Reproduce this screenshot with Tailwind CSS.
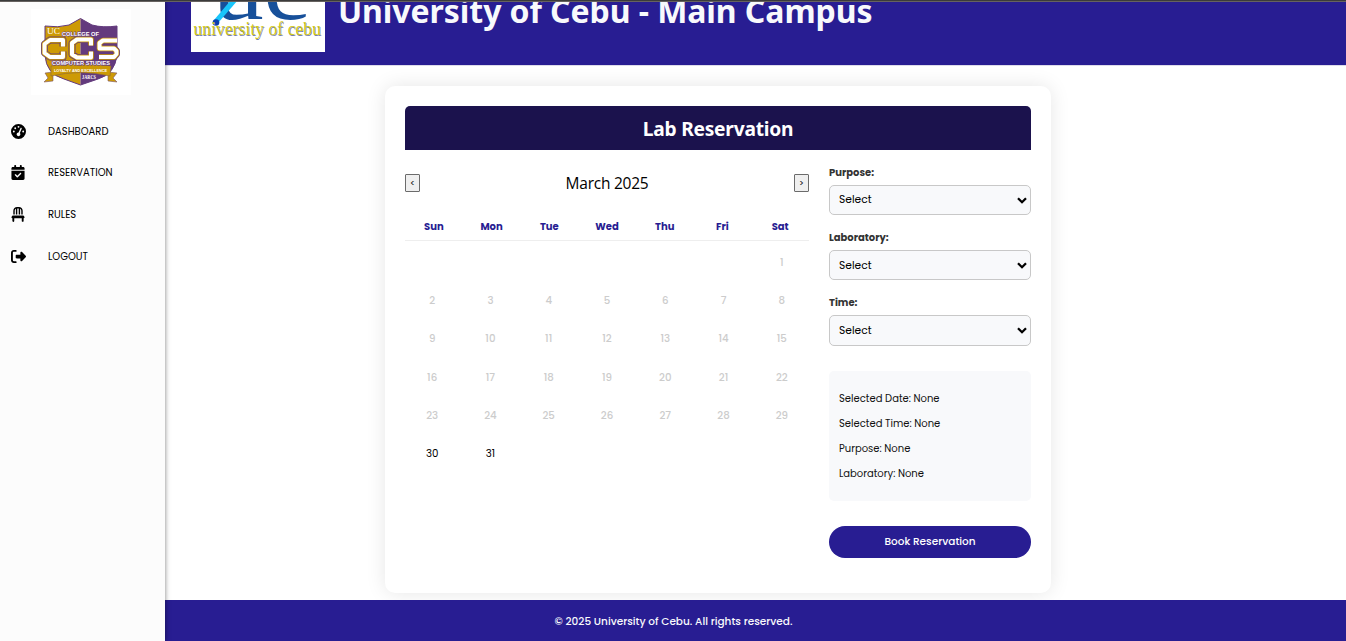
<!DOCTYPE html>
<html lang="en">
<head>
<meta charset="utf-8">
<title>Lab Reservation</title>
<script src="https://cdn.jsdelivr.net/npm/@tailwindcss/browser@4"></script>
</head>
<body class="bg-white font-['Poppins','Inter',sans-serif] text-[10px] text-black">
<div class="relative flex h-[641px] w-[1346px] overflow-hidden">
  <aside class="z-10 w-[165px] shrink-0 bg-[#fcfcfc] pt-[9px] shadow-[0_0_5px_rgba(0,0,0,0.5)]">
    <svg class="ml-[31px] block bg-white" width="100" height="86" viewBox="31 9 100 86">
      <path d="M80.500 18.500L69 25Q58 28 45 26V55Q46 74 64 79L80.500 85Z" fill="#cd9a05"/>
      <path d="M80.500 18.500L92 25Q103 28 117 26V55Q115 74 98 79L80.500 85Z" fill="#633a7d"/>
      <path d="M80.500 18.500L69 25Q58 28 45 26V55Q46 74 64 79L80.500 85L98 79Q115 74 117 55V26Q103 28 92 25Z" fill="none" stroke="#633a7d"/>
      <path d="M45 73L53 72V81L44 82L48 78ZM117 73L108 72V81L117 82L113 78Z" fill="#cd9a05" stroke="#7c5568" stroke-width=".6"/>
      <path d="M51 66Q80.500 60 111 66L110 76Q80.500 69 51 76Z" fill="#cd9a05" stroke="#8a6440" stroke-width=".6"/>
      <g font-family="Liberation Serif" font-weight="700" fill="#fff">
        <text x="47" y="34" font-size="8" font-weight="400" textLength="13" lengthAdjust="spacingAndGlyphs">UC</text>
        <text x="82" y="78.500" font-size="5.500" textLength="14" lengthAdjust="spacingAndGlyphs">JARCS</text>
      </g>
      <g font-family="Liberation Sans" font-weight="700" stroke-linejoin="round" paint-order="stroke">
        <text x="62" y="36" font-size="5" fill="#fff" stroke="#633a7d" stroke-width="1" textLength="37" lengthAdjust="spacingAndGlyphs">COLLEGE OF</text>
        <text x="52" y="65" font-size="5" fill="#fff" stroke="#633a7d" stroke-width="1.200" textLength="58" lengthAdjust="spacingAndGlyphs">COMPUTER STUDIES</text>
        <text x="54" y="72" font-size="3.500" fill="#fff" textLength="53" lengthAdjust="spacingAndGlyphs">LOYALTY AND EXCELLENCE</text>
      </g>
      <g fill="none" stroke-linejoin="round">
        <g stroke="#633a7d" stroke-width="7"><path d="M63 46.500V40H50L44.500 44V53L50 57H63V51.500M91 45.500V39.500H77L72 43V54.500L77 57.500H91V51.500M117 40.500H103L99.500 43V48.500H114L116.500 51V54L114 57H99"/></g>
        <g stroke="#cd9a05" stroke-width="5.500"><path d="M63 46.500V40H50L44.500 44V53L50 57H63V51.500M91 45.500V39.500H77L72 43V54.500L77 57.500H91V51.500M117 40.500H103L99.500 43V48.500H114L116.500 51V54L114 57H99"/></g>
        <g stroke="#fff" stroke-width="4"><path d="M63 46.500V40H50L44.500 44V53L50 57H63V51.500M91 45.500V39.500H77L72 43V54.500L77 57.500H91V51.500M117 40.500H103L99.500 43V48.500H114L116.500 51V54L114 57H99"/></g>
      </g>
    </svg>
    <nav class="mt-[15.600px] text-[10px]">
      <a class="flex h-[41.600px] items-center pl-[11px]"><svg class="mr-[22px] h-[15px] w-[15px]" viewBox="0 0 512 512"><path d="M0 256a256 256 0 1 1 512 0A256 256 0 1 1 0 256zM288 96a32 32 0 1 0 -64 0 32 32 0 1 0 64 0zM256 416c35.300 0 64-28.700 64-64c0-17.400-6.900-33.100-18.100-44.600L366 161.700c5.300-12.100-.2-26.300-12.300-31.600s-26.300 .2-31.600 12.300L257.900 288c-.6 0-1.300 0-1.900 0c-35.300 0-64 28.700-64 64s28.700 64 64 64zM176 144a32 32 0 1 0 -64 0 32 32 0 1 0 64 0zM96 288a32 32 0 1 0 0-64 32 32 0 1 0 0 64zm352-32a32 32 0 1 0 -64 0 32 32 0 1 0 64 0z"/></svg><span>DASHBOARD</span></a>
      <a class="flex h-[41.600px] items-center pl-[11px]"><svg class="mr-[23px] h-[15px] w-[14px]" viewBox="0 0 448 512"><path d="M128 0c17.700 0 32 14.300 32 32V64H288V32c0-17.700 14.300-32 32-32s32 14.300 32 32V64h48c26.500 0 48 21.500 48 48v48H0V112C0 85.500 21.500 64 48 64H96V32c0-17.700 14.300-32 32-32zM0 192H448V464c0 26.500-21.500 48-48 48H48c-26.500 0-48-21.500-48-48V192zM329 305c9.400-9.400 9.400-24.600 0-33.900s-24.600-9.400-33.900 0l-95 95-47-47c-9.400-9.400-24.600-9.400-33.900 0s-9.400 24.600 0 33.900l64 64c9.400 9.400 24.600 9.400 33.900 0L329 305z"/></svg><span>RESERVATION</span></a>
      <a class="flex h-[41.600px] items-center pl-[11px]"><svg class="mr-[23px] h-[15px] w-[14px]" viewBox="0 0 448 512"><path d="M248 48l0 208 48 0 0-197.300c23.900 13.800 40 39.700 40 69.300l0 128 48 0 0-128C384 57.300 326.700 0 256 0L192 0C121.300 0 64 57.300 64 128l0 128 48 0 0-128c0-29.600 16.100-55.500 40-69.300L152 256l48 0 0-208 48 0zM48 288c-12.100 0-23.200 6.800-28.600 17.700l-16 32c-5 9.900-4.400 21.700 1.400 31.100S20.900 384 32 384l0 96c0 17.700 14.300 32 32 32s32-14.300 32-32l0-96 256 0 0 96c0 17.700 14.300 32 32 32s32-14.300 32-32l0-96c11.100 0 21.400-5.700 27.200-15.200s6.400-21.200 1.400-31.100l-16-32C423.200 294.800 412.100 288 400 288L48 288z"/></svg><span>RULES</span></a>
      <a class="flex h-[41.600px] items-center pl-[11px]"><svg class="mr-[22px] h-[15px] w-[15px]" viewBox="0 0 512 512"><path d="M377.900 105.900L500.700 228.700c7.200 7.200 11.300 17.100 11.300 27.300s-4.100 20.100-11.300 27.300L377.900 406.100c-6.400 6.400-15 9.900-24 9.900c-18.700 0-33.900-15.200-33.900-33.900l0-62.100-128 0c-17.700 0-32-14.300-32-32l0-64c0-17.700 14.300-32 32-32l128 0 0-62.100c0-18.700 15.200-33.900 33.900-33.900c9 0 17.600 3.600 24 9.900zM160 96L96 96c-17.700 0-32 14.300-32 32l0 256c0 17.700 14.300 32 32 32l64 0c17.700 0 32 14.300 32 32s-14.300 32-32 32l-64 0c-53 0-96-43-96-96L0 128C0 75 43 32 96 32l64 0c17.700 0 32 14.300 32 32s-14.300 32-32 32z"/></svg><span>LOGOUT</span></a>
    </nav>
  </aside>

  <div class="flex min-w-0 flex-1 flex-col">
    <header class="flex h-[65px] shrink-0 overflow-hidden bg-[#281d92] pl-[26px] shadow-[0_1px_0_#dddbea]">
      <svg class="block shrink-0 bg-white" width="134" height="52" viewBox="191 0 134 52">
        <g font-family="Liberation Serif">
          <text x="213" y="18.500" font-size="92" fill="#17509a" textLength="96" lengthAdjust="spacingAndGlyphs">uc</text>
          <path d="M214 20L231 0H238L218 23Z" fill="#19c5fa"/>
          <circle cx="216" cy="22.500" r="3.300" fill="#0b3fae"/>
          <text x="194" y="35.500" font-size="19" fill="#777db0" textLength="127.500" lengthAdjust="spacingAndGlyphs">university of cebu</text>
          <text x="193.500" y="34.800" font-size="19" fill="#d2cb1c" textLength="127.500" lengthAdjust="spacingAndGlyphs">university of cebu</text>
        </g>
      </svg>
      <h1 class="-mt-[10px] ml-[13px] h-[42px] whitespace-nowrap font-['Segoe_UI','Noto_Sans',sans-serif] text-[32px] leading-[42px] font-bold tracking-[-0.070px] text-[#f8f9fc]">University of Cebu - Main Campus</h1>
    </header>

    <main class="flex flex-1 justify-center pr-[91px] pt-[21px] pl-[16px]">
      <section class="h-[507px] w-[666px] rounded-[10px] bg-white p-[20px] shadow-[0_0_20px_rgba(0,0,0,0.1)]">
        <h2 class="flex h-[44px] items-center justify-center rounded-t-[5px] bg-[#1b124d] pt-[2px] font-['Segoe_UI','Noto_Sans',sans-serif] text-[19.200px] font-bold tracking-[-0.240px] text-white">Lab Reservation</h2>
        <div class="flex gap-[20px]">
          <div class="w-[404px]">
            <div class="mt-[20px] flex h-[26px] items-center justify-between">
              <button class="flex h-[18px] w-[15px] items-center justify-center rounded-[1px] border border-[#6b6b6b] bg-[#efefef] pt-[1px] text-[9px]">&lt;</button>
              <span class="pt-[2px] font-['Segoe_UI','Open_Sans',sans-serif] text-[15.500px] tracking-[-0.250px]">March 2025</span>
              <button class="flex h-[18px] w-[15px] items-center justify-center rounded-[1px] border border-[#6b6b6b] bg-[#efefef] pt-[1px] text-[9px]">&gt;</button>
            </div>
            <div class="mt-[16px] grid h-[29px] grid-cols-7 items-center border-b border-[#eeeeee] pt-[1px] text-center text-[10px] font-bold text-[#281d92]">
              <span>Sun</span><span>Mon</span><span>Tue</span><span>Wed</span><span>Thu</span><span>Fri</span><span>Sat</span>
            </div>
            <div class="mt-[2.500px] grid auto-rows-[38.250px] grid-cols-7 items-center gap-x-[4px] text-center text-[10.240px] font-medium text-[#cccccc]">
              <span class="col-start-7">1</span>
              <span>2</span><span>3</span><span>4</span><span>5</span><span>6</span><span>7</span><span>8</span>
              <span>9</span><span>10</span><span>11</span><span>12</span><span>13</span><span>14</span><span>15</span>
              <span>16</span><span>17</span><span>18</span><span>19</span><span>20</span><span>21</span><span>22</span>
              <span>23</span><span>24</span><span>25</span><span>26</span><span>27</span><span>28</span><span>29</span>
              <span class="font-normal text-black">30</span><span class="font-normal text-black">31</span>
            </div>
          </div>
          <div class="w-[202px] pt-[15px]">
            <div class="h-[65px]">
              <label class="block h-[20px] text-[10px] leading-[15px] font-bold text-[#333]">Purpose:</label>
              <div class="flex h-[30px] items-center justify-between rounded-[5px] border border-[#c8c8c8] bg-[#f8f9fb] pr-[3px] pl-[9px] text-[10.700px]"><span>Select</span><svg class="h-[7px] w-[10px]" viewBox="0 0 10 7"><path d="M1 1.200L5 5.200L9 1.200" fill="none" stroke="#000" stroke-width="2.300"/></svg></div>
            </div>
            <div class="h-[65px]">
              <label class="block h-[20px] text-[10px] leading-[15px] font-bold text-[#333]">Laboratory:</label>
              <div class="flex h-[30px] items-center justify-between rounded-[5px] border border-[#c8c8c8] bg-[#f8f9fb] pr-[3px] pl-[9px] text-[10.700px]"><span class="pt-[2px]">Select</span><svg class="h-[7px] w-[10px]" viewBox="0 0 10 7"><path d="M1 1.200L5 5.200L9 1.200" fill="none" stroke="#000" stroke-width="2.300"/></svg></div>
            </div>
            <div class="h-[76px]">
              <label class="block h-[20px] text-[10px] leading-[15px] font-bold text-[#333]">Time:</label>
              <div class="flex h-[31px] items-center justify-between rounded-[5px] border border-[#c8c8c8] bg-[#f8f9fb] pr-[3px] pl-[9px] text-[10.700px]"><span class="pt-[1px]">Select</span><svg class="h-[7px] w-[10px]" viewBox="0 0 10 7"><path d="M1 1.200L5 5.200L9 1.200" fill="none" stroke="#000" stroke-width="2.300"/></svg></div>
            </div>
            <div class="h-[130px] rounded-[5px] bg-[#f8f9fb] pt-[15px] pl-[10px] text-[10px] leading-[25px] text-[#111]">
              <p>Selected Date: None</p><p>Selected Time: None</p><p>Purpose: None</p><p>Laboratory: None</p>
            </div>
            <button class="mt-[25px] flex h-[32px] w-full items-center justify-center rounded-full bg-[#281d92] pb-[1px] text-[10.500px] font-medium text-white">Book Reservation</button>
          </div>
        </div>
      </section>
    </main>
    <footer class="z-[5] flex h-[41px] shrink-0 items-center justify-center bg-[#281d92] pt-[2px] pr-[164px] text-[10.500px] font-medium text-[#f8f9fc]">© 2025 University of Cebu. All rights reserved.</footer>
  </div>
  <div class="absolute inset-x-0 top-0 z-20 h-[2px] border-b border-[#66625f] bg-[#3b3b3b]"></div>
</div>
</body>
</html>
